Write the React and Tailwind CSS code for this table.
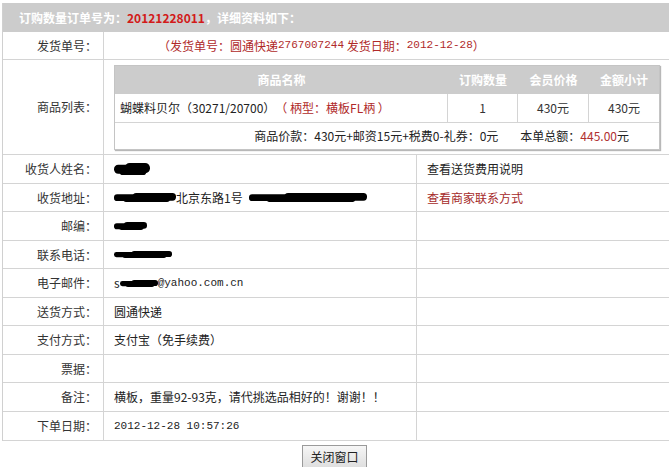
import React from "react";

const font = { fontFamily: '"SimSun", "Noto Sans CJK SC", sans-serif' };

// black scribble used where the screenshot has redacted text
const Blob = ({ w, h = 11, className = "" }) => (
  <svg width={w} height={h} viewBox={`0 0 ${w} ${h}`} className={`inline-block align-middle ${className}`}>
    <rect x="0" y={h * 0.15} width={w * 0.6} height={h * 0.75} rx={h * 0.35} fill="#000" />
    <rect x={w * 0.3} y="0" width={w * 0.7} height={h * 0.85} rx={h * 0.4} fill="#000" />
    <rect x={w * 0.15} y={h * 0.4} width={w * 0.75} height={h * 0.6} rx={h * 0.3} fill="#000" />
  </svg>
);

const rows = [
  { label: "收货人姓名：", h: "h-[29px]", value: <Blob w={36} h={12} />, side: <span className="text-[#222]">查看送货费用说明</span> },
  {
    label: "收货地址：",
    h: "h-[28px]",
    value: (
      <span className="flex items-center">
        <Blob w={62} h={9} />
        <span>北京东路1号</span>
        <Blob w={118} h={9} className="ml-[6px]" />
      </span>
    ),
    side: <span className="text-[#a52a2a]">查看商家联系方式</span>,
  },
  { label: "邮编：", h: "h-[29px]", value: <Blob w={33} h={8} /> },
  { label: "联系电话：", h: "h-[28px]", value: <Blob w={58} h={7} /> },
  {
    label: "电子邮件：",
    h: "h-[29px]",
    value: (
      <span className="flex items-center">
        <span>s</span>
        <Blob w={38} h={7} />
        <span className="font-mono text-[11px]">@yahoo.com.cn</span>
      </span>
    ),
  },
  { label: "送货方式：", h: "h-[28px]", value: "圆通快递" },
  { label: "支付方式：", h: "h-[29px]", value: "支付宝（免手续费）" },
  { label: "票据：", h: "h-[28px]", value: "" },
  { label: "备注：", h: "h-[29px]", value: "横板，重量92-93克，请代挑选品相好的！谢谢！！" },
  { label: "下单日期：", h: "h-[29px]", value: <span className="font-mono text-[11px]">2012-12-28 10:57:26</span> },
];

const App = () => {
  return (
    <div className="w-[669px] h-[467px] bg-white text-[12px] text-[#333] overflow-hidden" style={font}>
      <div className="ml-[2px] mt-[3px] border-l border-[#d0d0d0]">
        {/* Header */}
        <div className="h-[29px] bg-[#cccccc] flex items-center pl-[16px] font-bold text-white">
          订购数量订单号为：<span className="text-[#d21a1a]">20121228011</span>，详细资料如下：
        </div>

        {/* 发货单号 */}
        <div className="flex h-[28px] border-b border-[#d4d4d4]">
          <div className="w-[101px] shrink-0 border-r border-[#d4d4d4] flex items-center justify-end pr-[6px]">发货单号：</div>
          <div className="flex-1 flex items-center pl-[54px] text-[#b02a2a]">
            （发货单号：圆通快递<span className="font-mono text-[11px]">2767007244</span>&nbsp;发货日期：<span className="font-mono text-[11px]">2012-12-28</span>）
          </div>
        </div>

        {/* 商品列表 */}
        <div className="flex h-[95px] border-b border-[#d4d4d4]">
          <div className="w-[101px] shrink-0 border-r border-[#d4d4d4] flex items-center justify-end pr-[6px]">商品列表：</div>
          <div className="flex-1 pl-[10px] pt-[5px]">
            <div className="w-[546px] h-[85px] border border-[#c4c4c4] shadow-[1px_1px_1px_#b8b8b8] flex flex-col">
              <div className="h-[28px] bg-[#cccccc] flex font-bold text-white">
                <div className="w-[333px] flex items-center justify-center">商品名称</div>
                <div className="w-[70px] flex items-center justify-center">订购数量</div>
                <div className="w-[71px] flex items-center justify-center">会员价格</div>
                <div className="flex-1 flex items-center justify-center">金额小计</div>
              </div>
              <div className="h-[29px] flex border-b border-[#d4d4d4]">
                <div className="w-[333px] flex items-center pl-[5px] border-r border-[#d4d4d4] text-[#222]">
                  蝴蝶料贝尔（30271/20700）<span className="text-[#b02a2a]">（ 柄型：横板FL柄 ）</span>
                </div>
                <div className="w-[70px] flex items-center justify-center border-r border-[#d4d4d4]">1</div>
                <div className="w-[71px] flex items-center justify-center border-r border-[#d4d4d4]">430元</div>
                <div className="flex-1 flex items-center justify-center">430元</div>
              </div>
              <div className="flex-1 flex items-center justify-end pr-[30px] text-[#222]">
                商品价款：430元+邮资15元+税费0-礼券：0元
                <span className="ml-[22px]">本单总额：<span className="text-[#b03030]">445.00</span>元</span>
              </div>
            </div>
          </div>
        </div>

        {rows.map((r) => (
          <div key={r.label} className={`flex ${r.h} border-b border-[#d4d4d4]`}>
            <div className="w-[101px] shrink-0 border-r border-[#d4d4d4] flex items-center justify-end pr-[6px]">{r.label}</div>
            <div className="w-[313px] shrink-0 border-r border-[#d4d4d4] flex items-center pl-[10px] text-[#222]">{r.value}</div>
            <div className="flex-1 flex items-center pl-[10px]">{r.side}</div>
          </div>
        ))}
      </div>

      {/* Close button */}
      <div className="flex justify-center pt-[4px]">
        <button className="w-[65px] h-[24px] border border-[#9a9a9a] bg-gradient-to-b from-[#f6f6f6] to-[#dedede] text-[12px] text-[#222]" style={font}>
          关闭窗口
        </button>
      </div>
    </div>
  );
};

export default App;
